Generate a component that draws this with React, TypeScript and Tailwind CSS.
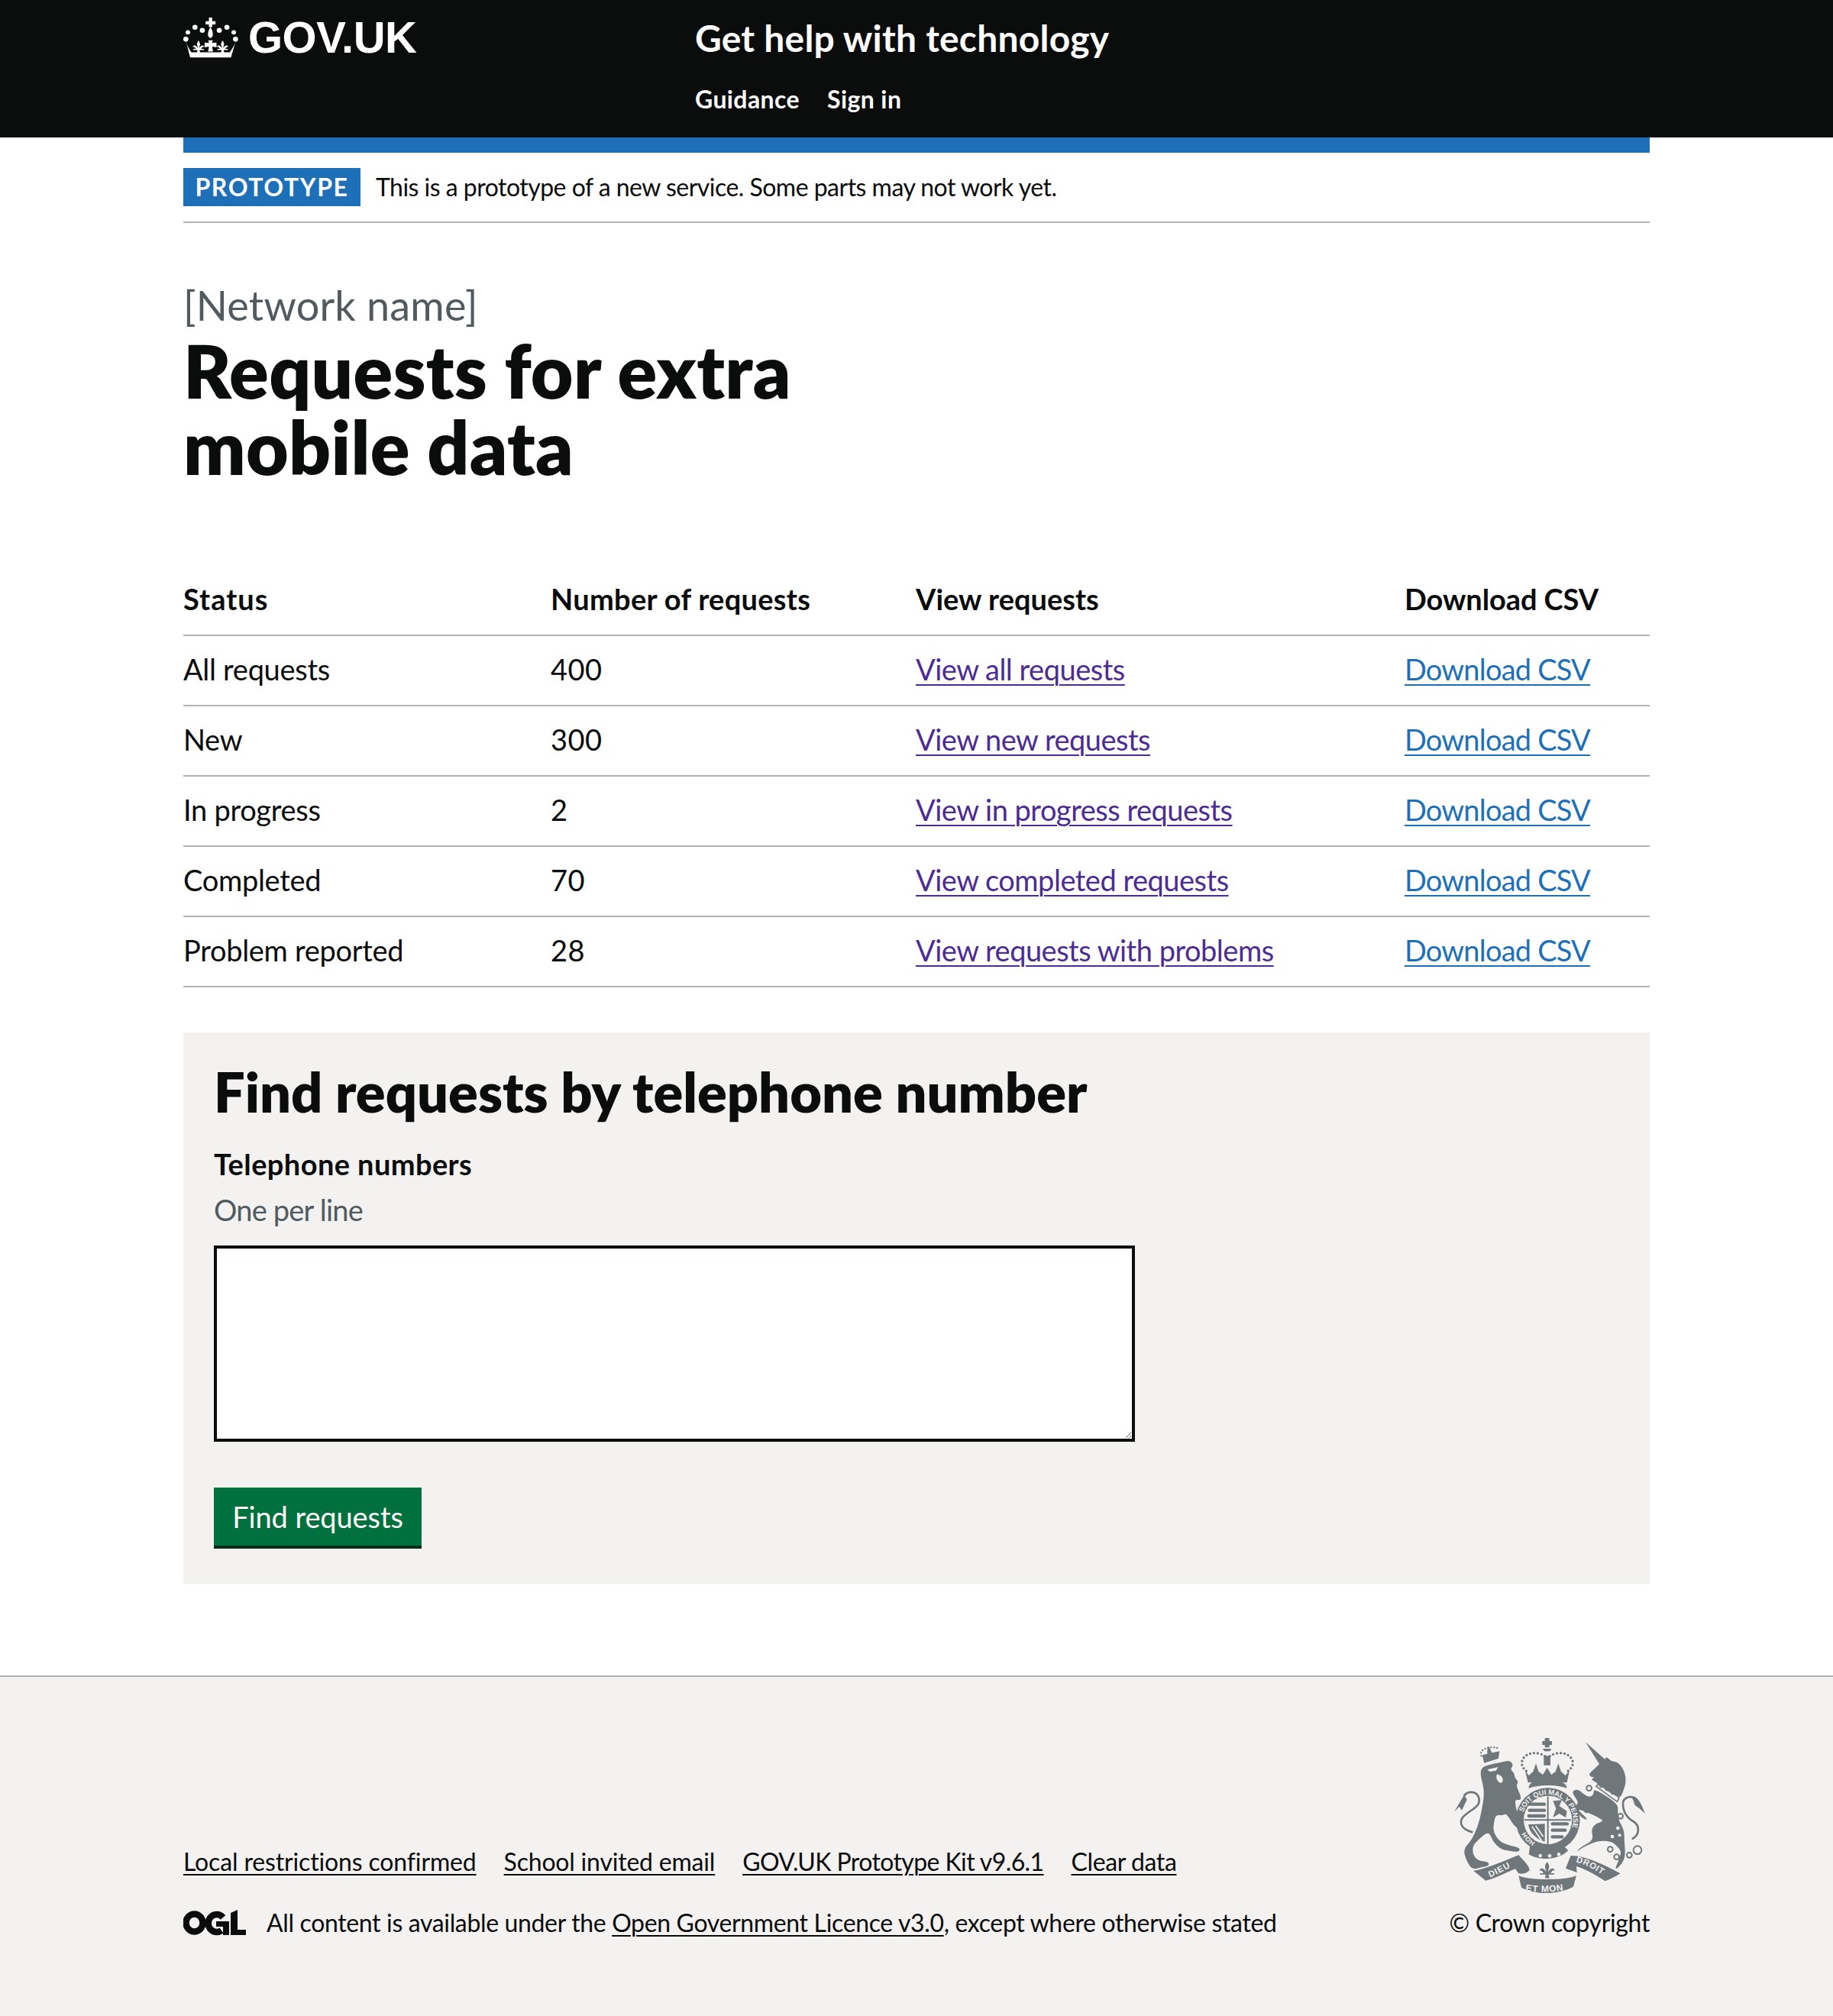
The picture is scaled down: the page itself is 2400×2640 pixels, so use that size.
import React from "react";

const rows = [
  { status: "All requests", count: "400", link: "View all requests" },
  { status: "New", count: "300", link: "View new requests" },
  { status: "In progress", count: "2", link: "View in progress requests" },
  { status: "Completed", count: "70", link: "View completed requests" },
  { status: "Problem reported", count: "28", link: "View requests with problems" },
];

const footerLinks = [
  { label: "Local restrictions confirmed", cls: "tracking-[-0.15px]" },
  { label: "School invited email", cls: "tracking-[-0.2px]" },
  { label: "GOV.UK Prototype Kit v9.6.1", cls: "tracking-[-0.6px]" },
  { label: "Clear data", cls: "tracking-[-0.4px]" },
];

// rounds the corners of a traced outline
const smooth = (pts: number[][]) => {
  const mid = (a: number[], b: number[]) => `${(a[0] + b[0]) / 2} ${(a[1] + b[1]) / 2}`;
  let d = `M${mid(pts[pts.length - 1], pts[0])}`;
  pts.forEach((p, i) => {
    d += ` Q${p[0]} ${p[1]} ${mid(p, pts[(i + 1) % pts.length])}`;
  });
  return d + " Z";
};

const lion = [
  [238, 225], [270, 212], [310, 205], [350, 195], [365, 215], [352, 230], [368, 245], [370, 265], [385, 280], [375, 295],
  [392, 330], [395, 352], [372, 350], [372, 365], [378, 400], [402, 430], [405, 455], [385, 465], [365, 450], [350, 425],
  [335, 405], [320, 412], [295, 410], [288, 440], [285, 475], [310, 515], [350, 530], [392, 540], [385, 556], [350, 552],
  [315, 545], [285, 515], [275, 490], [262, 478], [230, 505], [205, 530], [205, 565], [225, 590], [265, 593], [270, 610],
  [240, 615], [205, 625], [185, 600], [170, 560], [175, 535], [200, 510], [225, 455], [240, 395], [250, 330], [245, 290], [235, 255],
];

const unicornHead = [
  [700, 212], [725, 192], [730, 180], [748, 200], [775, 202], [800, 235], [808, 280], [795, 320], [782, 348], [700, 292],
  [690, 282], [668, 270], [686, 262], [670, 262], [660, 250], [680, 232],
];

const unicornBody = [
  [680, 305], [775, 365], [775, 400], [775, 425], [800, 470], [800, 510], [805, 570], [790, 605], [762, 628], [775, 595],
  [790, 555], [770, 530], [750, 515], [700, 510], [640, 535], [610, 558], [630, 535], [680, 510], [670, 470], [685, 445],
  [720, 435], [700, 420], [655, 400], [612, 385], [650, 420], [655, 430], [630, 420], [600, 375], [625, 365], [590, 318],
  [620, 308], [640, 330], [665, 340], [680, 330],
];

const Fleur = ({ x, y, s = 1 }: { x: number; y: number; s?: number }) => (
  <g transform={`translate(${x} ${y}) scale(${s})`}>
    <path d="M0 -22 C7 -12 7 -6 3 2 L3 6 C8 -4 20 -8 22 4 C20 0 14 2 10 10 L20 10 L20 14 L4 14 L6 24 L-6 24 L-4 14 L-20 14 L-20 10 L-10 10 C-14 2 -20 0 -22 4 C-20 -8 -8 -4 -3 6 L-3 2 C-7 -6 -7 -12 0 -22 Z" />
  </g>
);

const CrownLogo = () => (
  <svg viewBox="30 30 220 165" className="w-[73px] h-[55px] fill-white" aria-hidden="true">
    <circle cx="40" cy="118" r="10" />
    <circle cx="48" cy="91" r="9" />
    <circle cx="76" cy="71" r="10" />
    <circle cx="105" cy="83" r="10" />
    <circle cx="172" cy="83" r="10" />
    <circle cx="202" cy="71" r="10" />
    <circle cx="229" cy="91" r="9" />
    <circle cx="236" cy="118" r="10" />
    <path d="M131 33 H144 V47 H157 V60 H144 V70 H131 V60 H118 V47 H131 Z" />
    <path d="M137 70 C150 90 150 110 137 113 C124 110 124 90 137 70 Z" />
    <Fleur x={90} y={146} s={1.05} />
    <Fleur x={185} y={146} s={1.05} />
    <path d="M129 122 H146 L144 133 L161 131 V150 L144 147 L147 167 H128 L131 147 L114 150 V131 L131 133 Z" />
    <path d="M42 132 C46 145 52 155 62 170 H213 C223 155 230 145 235 132 L218 190 H57 Z" />
  </svg>
);

const OglLogo = () => (
  <svg viewBox="0 0 82 34" className="w-[82px] h-[34px] text-[#0b0c0c]" aria-hidden="true">
    <ellipse cx="14.5" cy="17" rx="11" ry="11.5" fill="none" stroke="currentColor" strokeWidth="8.5" />
    <path d="M52 10 A11 11.5 0 1 0 50 27" fill="none" stroke="currentColor" strokeWidth="8.5" />
    <path d="M43 15 H60 V33 H52 V22 H43 Z" fill="currentColor" />
    <path d="M62 4 L71 0 V26 H82 V33 H62 Z" fill="currentColor" />
  </svg>
);

const Crest = () => (
  <svg viewBox="120 90 780 645" className="w-[260px] h-[215px] fill-[#6f777b]" aria-label="Royal coat of arms">
    <defs>
      <path id="garter-top" d="M404 400 A100 100 0 1 1 549 517" />
      <path id="garter-bottom" d="M450 517 A100 100 0 0 1 407 467" />
      <path id="ribbon-left" d="M272 655 C300 645 335 625 372 605" />
      <path id="ribbon-centre" d="M412 708 C460 716 530 716 585 700" />
      <path id="ribbon-right" d="M610 595 C650 605 695 630 735 662" />
    </defs>

    {/* lion */}
    <path d={smooth(lion)} />
    <path d="M205 478 C150 465 150 430 175 410 C205 385 240 375 228 340 C218 315 185 315 170 335" fill="none" stroke="#6f777b" strokeWidth="8" />
    <path d="M172 330 L132 398 L152 378 L162 392 L182 350 Z" />
    <path d="M262 232 L305 222 L296 236 L272 240 Z M300 250 C325 255 330 280 315 285 C300 280 295 265 300 250 Z" className="fill-[#f3f2f1]" />
    <path d="M242 175 L262 170 L262 152 L268 140 L274 152 L280 166 L310 160 L306 188 L250 206 Z" />
    <path d="M238 178 C230 155 262 136 306 148" fill="none" stroke="#6f777b" strokeWidth="7" strokeLinecap="round" strokeDasharray="0 12" />

    {/* crown over the shield */}
    <path d="M488 108 H506 V120 H516 V135 H506 V145 H488 V135 H478 V120 H488 Z" />
    <path d="M480 150 H514 L508 160 H486 Z M484 178 H510 V215 H484 Z" />
    <path d="M498 190 C488 170 440 155 410 180 C390 200 395 225 420 240" fill="none" stroke="#6f777b" strokeWidth="10" strokeLinecap="round" strokeDasharray="0 15" />
    <path d="M498 190 C508 170 556 155 586 180 C606 200 600 225 575 240" fill="none" stroke="#6f777b" strokeWidth="10" strokeLinecap="round" strokeDasharray="0 15" />
    <path d="M410 235 L425 255 L442 240 L453 208 L464 240 L480 252 L497 225 L514 252 L530 240 L541 208 L552 240 L569 255 L585 235 L575 283 L422 283 Z" />
    <path d="M440 282 H555 C570 288 574 296 574 305 C530 290 465 290 425 305 C425 296 428 288 440 282 Z" />

    {/* garter and shield */}
    <circle cx="500" cy="430" r="126" />
    <circle cx="500" cy="430" r="95" className="fill-[#f3f2f1]" />
    <path d="M497 338 H503 V535 H497 Z M407 427 H592 V433 H407 Z" />
    <g fill="none" stroke="#6f777b" strokeLinecap="round">
      <path d="M428 368 H486 M428 392 H486 M425 414 H486" strokeWidth="13" strokeDasharray="14 4" />
      <path d="M518 445 H576 M518 470 H570 M518 496 H556" strokeWidth="13" strokeDasharray="14 4" />
    </g>
    <path d="M520 355 L555 352 L545 375 L575 395 L570 420 L545 405 L520 420 L532 385 Z" />
    <path d="M423 448 L488 445 L488 515 C455 505 430 485 423 448 Z" />
    <path d="M438 455 L475 510 M452 452 L482 496" stroke="#f3f2f1" strokeWidth="5" fill="none" />
    <g fontFamily="Liberation Sans, sans-serif" fontWeight="700" className="fill-[#f3f2f1]">
      <text fontSize="28">
        <textPath href="#garter-top">SOIT QUI MAL Y PENSE</textPath>
      </text>
      <text fontSize="26">
        <textPath href="#garter-bottom">HOH</textPath>
      </text>
    </g>
    <path d="M430 530 C470 560 530 560 565 535 L580 550 C540 590 465 590 425 565 Z" />
    <circle cx="470" cy="570" r="7" className="fill-[#f3f2f1]" />
    <circle cx="507" cy="571" r="7" className="fill-[#f3f2f1]" />
    <circle cx="543" cy="565" r="7" className="fill-[#f3f2f1]" />

    {/* motto ribbon */}
    <path d="M208 630 C270 618 330 590 385 568 C405 590 428 610 428 628 C415 642 400 642 385 640 L372 622 C330 640 290 660 256 668 Z" />
    <path d="M385 648 C420 668 575 668 612 648 L600 692 C540 725 450 725 396 695 Z" />
    <path d="M570 620 L590 570 C650 570 730 610 785 640 C760 655 740 665 725 670 C680 640 640 620 612 612 L614 636 Z" />
    <g fontFamily="Liberation Sans, sans-serif" fontWeight="700" className="fill-[#f3f2f1]">
      <text fontSize="34" letterSpacing="3">
        <textPath href="#ribbon-left">DIEU</textPath>
      </text>
      <text fontSize="36" letterSpacing="2">
        <textPath href="#ribbon-centre">ET MON</textPath>
      </text>
      <text fontSize="34" letterSpacing="2">
        <textPath href="#ribbon-right">DROIT</textPath>
      </text>
    </g>
    <Fleur x={497} y={625} s={1.4} />

    {/* unicorn */}
    <path d="M648 124 L728 195 L705 215 Z" />
    <path d={smooth(unicornHead)} />
    <path d={smooth(unicornBody)} />
    <path d="M690 298 L698 288 L708 302 L720 298 L730 314 L742 312 L752 328 L764 326 L780 344 L772 358 Z" fill="none" stroke="#6f777b" strokeWidth="5" />
    <path d="M830 505 C862 490 862 450 835 435 C810 420 795 395 795 365 C795 345 815 338 830 340" fill="none" stroke="#6f777b" strokeWidth="8" />
    <path d="M826 336 C845 335 860 345 882 405 L860 385 L842 372 L835 352 Z" />
    <g fill="none" stroke="#6f777b" strokeWidth="6">
      <circle cx="662" cy="305" r="10" />
      <circle cx="653" cy="390" r="10" />
      <circle cx="785" cy="415" r="10" />
      <circle cx="745" cy="545" r="10" />
      <circle cx="770" cy="575" r="10" />
      <circle cx="820" cy="568" r="10" />
      <circle cx="852" cy="548" r="16" />
    </g>
    <circle cx="775" cy="462" r="7" className="fill-[#f3f2f1]" />
    <circle cx="753" cy="495" r="7" className="fill-[#f3f2f1]" />
    <circle cx="782" cy="490" r="6" className="fill-[#f3f2f1]" />
  </svg>
);

export default function App() {
  return (
    <div className="font-['Lato',sans-serif] min-h-[2640px] flex flex-col bg-white text-[#0b0c0c] text-[38px] leading-[50px] tracking-[-0.5px]">
      <header className="h-[180px] bg-[#0b0c0c] text-white px-[240px] flex items-start">
        <a className="w-[670px] pt-[20px] flex items-center gap-[12px]">
          <CrownLogo />
          <span className="font-['Liberation_Sans',sans-serif] font-bold text-[58px] leading-[58px] tracking-[-0.5px]">GOV.UK</span>
        </a>
        <div className="pt-[20px]">
          <div className="font-bold text-[48px] leading-[60px] tracking-[0.2px]">Get help with technology</div>
          <nav className="mt-[25px] flex gap-[36px] font-bold text-[32px] leading-[50px] tracking-[0.4px]">
            <a>Guidance</a>
            <a>Sign in</a>
          </nav>
        </div>
      </header>

      <main className="mx-[240px] w-[1920px]">
        <div className="h-[20px] bg-[#1d70b8]"></div>
        <div className="pt-[20px] pb-[20px] border-b-2 border-[#b1b4b6] flex items-center gap-[20px]">
          <strong className="w-[232px] h-[50px] bg-[#1d70b8] text-white text-[32px] leading-[50px] text-center font-bold uppercase tracking-[1.6px]">Prototype</strong>
          <span className="text-[32px] leading-[50px] tracking-[-0.52px]">This is a prototype of a new service. Some parts may not work yet.</span>
        </div>

        <div className="mt-[83px] text-[#505a5f] text-[54px] leading-[50px] tracking-[0.2px]">[Network name]</div>
        <h1 className="mt-[10px] font-extrabold text-[96px] leading-[100px] tracking-[0.3px]">
          Requests for extra
          <br />
          mobile data
        </h1>

        <table className="mt-[106px] w-full table-fixed border-collapse">
          <thead>
            <tr className="border-b-2 border-[#b1b4b6] text-left">
              <th className="w-[481px] pt-[18px] pb-[22px] font-bold tracking-[1px]">Status</th>
              <th className="w-[478px] pt-[18px] pb-[22px] font-bold tracking-[0.3px]">Number of requests</th>
              <th className="w-[640px] pt-[18px] pb-[22px] font-bold tracking-[0px]">View requests</th>
              <th className="pt-[18px] pb-[22px] font-bold tracking-[-0.1px]">Download CSV</th>
            </tr>
          </thead>
          <tbody>
            {rows.map((r) => (
              <tr key={r.status} className="border-b-2 border-[#b1b4b6]">
                <td className="pt-[18px] pb-[22px] tracking-[-0.3px]">{r.status}</td>
                <td className="pt-[18px] pb-[22px] tracking-[0.5px]">{r.count}</td>
                <td className="pt-[18px] pb-[22px]">
                  <a className="text-[#4c2c92] underline decoration-2 underline-offset-[5px]">{r.link}</a>
                </td>
                <td className="pt-[18px] pb-[22px] tracking-[-0.8px]">
                  <a className="text-[#1d70b8] underline decoration-2 underline-offset-[5px]">Download CSV</a>
                </td>
              </tr>
            ))}
          </tbody>
        </table>

        <section className="mt-[59px] bg-[#f3f2f1] px-[40px] pt-[37px] pb-[46px]">
          <h2 className="font-extrabold text-[72px] leading-[80px] tracking-[0px]">Find requests by telephone number</h2>
          <label className="block mt-[30px] font-bold tracking-[0.4px]">Telephone numbers</label>
          <div className="mt-[10px] text-[#505a5f] tracking-[-0.8px]">One per line</div>
          <textarea className="block mt-[22px] w-[1206px] h-[257px] bg-white border-4 border-[#0b0c0c] rounded-none"></textarea>
          <button className="block mt-[60px] w-[272px] h-[76px] mb-[4px] bg-[#00703c] text-white shadow-[0_4px_0_#002d18] text-center tracking-[-0.1px]">
            Find requests
          </button>
        </section>
      </main>

      <footer className="mt-[120px] grow bg-[#f3f2f1] border-t-2 border-[#b1b4b6] px-[240px] pb-[102px] flex items-end justify-between text-[32px] leading-[40px] tracking-[-0.35px]">
        <div>
          <ul className="flex gap-[36px]">
            {footerLinks.map((l) => (
              <li key={l.label} className={l.cls}>
                <a className="underline decoration-2 underline-offset-[4px]">{l.label}</a>
              </li>
            ))}
          </ul>
          <div className="mt-[40px] flex items-center gap-[27px]">
            <OglLogo />
            <span>
              All content is available under the{" "}
              <a className="underline decoration-2 underline-offset-[4px]">Open Government Licence v3.0</a>, except where otherwise stated
            </span>
          </div>
        </div>
        <div className="flex flex-col items-end">
          <Crest />
          <a className="mt-[13px]">© Crown copyright</a>
        </div>
      </footer>
    </div>
  );
}
